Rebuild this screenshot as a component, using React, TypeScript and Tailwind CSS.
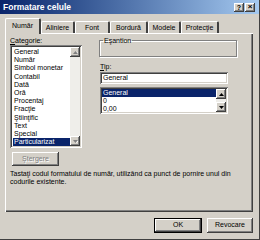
import React from 'react';

/* Classic Win2000 dialog — "Formatare celule", tab Număr */

const raised =
  'shadow-[inset_-1px_-1px_#404040,inset_1px_1px_#ffffff,inset_-2px_-2px_#808080,inset_2px_2px_#d4d0c8]';
const sunken =
  'shadow-[inset_1px_1px_#808080,inset_-1px_-1px_#ffffff,inset_2px_2px_#404040,inset_-2px_-2px_#d4d0c8]';

const categories = [
  'General',
  'Număr',
  'Simbol monetar',
  'Contabil',
  'Dată',
  'Oră',
  'Procentaj',
  'Fracţie',
  'Ştiinţific',
  'Text',
  'Special',
  'Particularizat',
];

const tabs = [
  { label: 'Număr', w: 'w-[36px]', active: true },
  { label: 'Aliniere', w: 'w-[34px]' },
  { label: 'Font', w: 'w-[35px]' },
  { label: 'Bordură', w: 'w-[38px]' },
  { label: 'Modele', w: 'w-[33px]' },
  { label: 'Protecţie', w: 'w-[38px]' },
];

function Arrow({ up, disabled }: { up?: boolean; disabled?: boolean }) {
  const fill = disabled ? '#808080' : '#000000';
  return (
    <div className={`w-[10px] h-[10px] bg-[#d4d0c8] flex items-center justify-center ${raised}`}>
      <svg width="5" height="3" viewBox="0 0 5 3">
        {disabled && (
          <polygon points={up ? '1.5,3 6,3 3.5,0.5' : '1.5,0.5 6,0.5 3.5,3'} fill="#ffffff" />
        )}
        <polygon points={up ? '0,3 5,3 2.5,0' : '0,0 5,0 2.5,3'} fill={fill} />
      </svg>
    </div>
  );
}

function ScrollBar({ disabled }: { disabled?: boolean }) {
  return (
    <div className="w-[10px] h-full flex flex-col bg-[#efeeea]">
      <Arrow up disabled={disabled} />
      <div className="flex-1" />
      <Arrow disabled={disabled} />
    </div>
  );
}

export default function App() {
  return (
    <div className="w-[260px] h-[240px] bg-[#d4d0c8] font-['Tahoma','Liberation_Sans',sans-serif] text-[7px] text-black overflow-hidden border-r border-b border-[#404040] flex flex-col">
      {/* title bar */}
      <div className="h-[14px] shrink-0 bg-gradient-to-r from-[#0a246a] to-[#a6caf0] flex items-center pl-[3px] pr-[4px]">
        <span className="text-white font-bold text-[8.5px] leading-none">Formatare celule</span>
        <div className="ml-auto flex gap-[1px]">
          <div className={`w-[10px] h-[9px] bg-[#d4d0c8] flex items-center justify-center font-bold text-[7px] leading-none ${raised}`}>
            ?
          </div>
          <div className={`w-[10px] h-[9px] bg-[#d4d0c8] flex items-center justify-center font-bold text-[8px] leading-none ${raised}`}>
            ×
          </div>
        </div>
      </div>

      {/* tabs */}
      <div className="h-[19px] shrink-0 flex items-end pl-[5px] relative z-10">
        {tabs.map((t) => (
          <div
            key={t.label}
            className={`${t.w} ${
              t.active ? 'h-[16px] -mb-px bg-[#d4d0c8] pb-[3px]' : 'h-[12px]'
            } flex items-center justify-center border-t border-l border-white border-r-2 border-r-[#404040] rounded-t-[2px] leading-none`}
          >
            {t.label}
          </div>
        ))}
      </div>

      {/* panel */}
      <div className={`ml-[5px] w-[248px] h-[179px] shrink-0 bg-[#d4d0c8] shadow-[inset_1px_1px_#ffffff,inset_-1px_-1px_#404040,inset_-2px_-2px_#808080] pt-[3px] pl-[5px] flex flex-col`}>
        <div className="flex gap-[17px]">
          {/* left column */}
          <div className="w-[72px] flex flex-col">
            <div className="h-[9px] leading-[9px]">
              <span className="underline">C</span>ategorie:
            </div>
            <div className={`h-[103px] bg-white p-[2px] flex ${sunken}`}>
              <div className="flex-1 pt-[1px] pl-[1px]">
                {categories.map((c, i) => (
                  <div
                    key={c}
                    className={`h-[8.2px] leading-[8.2px] pl-[1px] whitespace-nowrap ${
                      i === categories.length - 1 ? 'bg-[#0a246a] text-white' : ''
                    }`}
                  >
                    {c}
                  </div>
                ))}
              </div>
              <ScrollBar disabled />
            </div>
            <div
              className={`mt-[4px] ml-[2px] w-[47px] h-[14px] flex items-center justify-center text-[#808080] [text-shadow:1px_1px_#ffffff] ${raised}`}
            >
              Ştergere
            </div>
          </div>

          {/* right column */}
          <div className="w-[138px] flex flex-col">
            <fieldset className="h-[21px] border border-[#808080] shadow-[1px_1px_#ffffff,inset_1px_1px_#ffffff] px-[3px]">
              <legend className="px-[1px] h-[9px] leading-[9px]">Eşantion</legend>
            </fieldset>
            <div className="mt-[5px] ml-[1px] h-[9px] leading-[9px]">
              <span className="underline">T</span>ip:
            </div>
            <div className={`mt-[1px] ml-[1px] w-[128px] h-[12px] bg-white flex items-center pl-[3px] ${sunken}`}>
              General
            </div>
            <div className={`mt-[3px] ml-[1px] w-[128px] h-[27px] bg-white p-[2px] flex ${sunken}`}>
              <div className="flex-1">
                <div className="h-[8px] leading-[8px] pl-[1px] bg-[#0a246a] text-white">General</div>
                <div className="h-[8px] leading-[8px] pl-[1px]">0</div>
                <div className="h-[8px] leading-[8px] pl-[1px]">0,00</div>
              </div>
              <ScrollBar />
            </div>
          </div>
        </div>

        <p className="mt-[4px] leading-[8px] w-[235px]">
          Tastaţi codul formatului de număr, utilizând ca punct de pornire unul din codurile existente.
        </p>
      </div>

      {/* buttons */}
      <div className="mt-[6px] flex justify-end gap-[5px] pr-[6px]">
        <div className="w-[48px] h-[15px] border border-black">
          <div className={`w-full h-full flex items-center justify-center ${raised}`}>OK</div>
        </div>
        <div className={`w-[46px] h-[15px] flex items-center justify-center ${raised}`}>Revocare</div>
      </div>
    </div>
  );
}
